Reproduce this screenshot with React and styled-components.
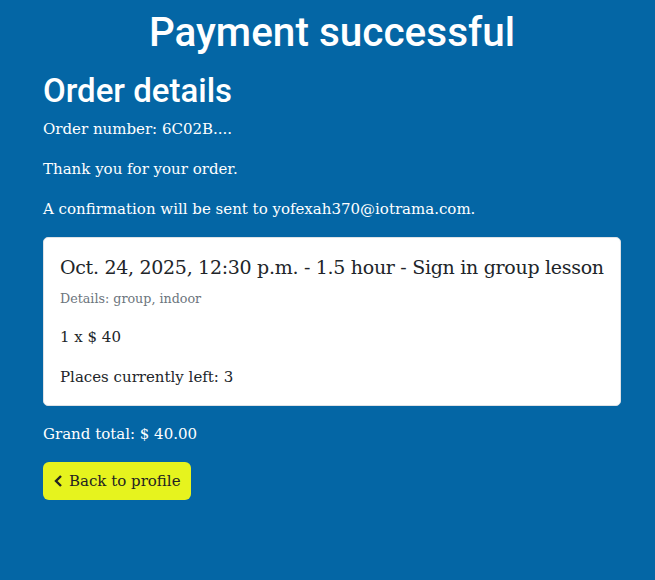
import React from 'react';
import styled, { createGlobalStyle } from 'styled-components';

const GlobalStyle = createGlobalStyle`
  html, body {
    margin: 0;
    padding: 0;
    background: #0466a5;
  }
  body {
    font-family: "DejaVu Serif", "Liberation Serif", serif;
    color: #ffffff;
  }
`;

export default function App() {
  return (
    <Page>
      <GlobalStyle />
      <Container>
        <Title>Payment successful</Title>
        <SubTitle>Order details</SubTitle>
        <Text>Order number: 6C02B....</Text>
        <Text>Thank you for your order.</Text>
        <Text>A confirmation will be sent to yofexah370@iotrama.com.</Text>
        <Card>
          <CardTitle>Oct. 24, 2025, 12:30 p.m. - 1.5 hour - Sign in group lesson</CardTitle>
          <Muted>Details: group, indoor</Muted>
          <CardText>1 x $ 40</CardText>
          <CardText>Places currently left: 3</CardText>
        </Card>
        <Text>Grand total: $ 40.00</Text>
        <BackButton>
          <svg width="12" height="14" viewBox="0 0 12 14">
            <path d="M8 2 L3 7 L8 12" fill="none" stroke="#222" strokeWidth="2.4" />
          </svg>
          Back to profile
        </BackButton>
      </Container>
    </Page>
  );
}

const Page = styled.div`
  min-height: 580px;
  background: #0466a5;
`;
const Container = styled.div`
  width: 578px;
  padding-left: 43px;
  padding-top: 8px;
`;
const Title = styled.h1`
  font-family: "Roboto", "Open Sans", sans-serif;
  font-weight: 500;
  font-size: 40.5px;
  line-height: 48px;
  text-align: center;
  margin: 0 0 15px;
`;
const SubTitle = styled.h2`
  font-family: "Roboto", "Open Sans", sans-serif;
  font-weight: 500;
  font-size: 33px;
  line-height: 40px;
  margin: 0 0 6px;
`;
const Text = styled.p`
  font-size: 15px;
  line-height: 24px;
  margin: 0 0 16px;
`;
const Card = styled.div`
  background: #ffffff;
  color: #212529;
  border: 1px solid #dee2e6;
  border-radius: 5px;
  padding: 17px 16px 16px;
  margin: 0 0 16px;
`;
const CardTitle = styled.h5`
  font-size: 19px;
  font-weight: 400;
  letter-spacing: -0.3px;
  line-height: 24px;
  white-space: nowrap;
  margin: 0 0 10px;
`;
const Muted = styled.p`
  font-size: 12.7px;
  color: #6c757d;
  line-height: 20px;
  margin: 0 0 16px;
`;
const CardText = styled.p`
  font-size: 15px;
  line-height: 24px;
  margin: 0 0 16px;
  &:last-child { margin-bottom: 0; }
`;
const BackButton = styled.button`
  display: inline-flex;
  align-items: center;
  gap: 4px;
  height: 38px;
  background: #e6f31e;
  color: #222;
  border: none;
  border-radius: 6px;
  padding: 0 10px;
  font-family: "DejaVu Serif", "Liberation Serif", serif;
  font-size: 15px;
  line-height: 22px;
  cursor: pointer;
`;
